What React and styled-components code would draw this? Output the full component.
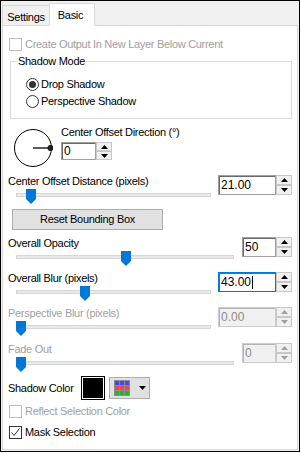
import React from "react"
import styled, { createGlobalStyle } from "styled-components"

const GlobalStyle = createGlobalStyle`
  html, body {
    margin: 0;
    padding: 0;
    background: #fff;
  }
  body {
    font-family: "Liberation Sans", Arial, sans-serif;
    font-size: 11px;
    letter-spacing: -0.3px;
    color: #000;
  }
`

const Frame = styled.div`
  width: 300px;
  height: 452px;
  box-sizing: border-box;
  border: 1px solid #000;
  background: #f0f0f0;
  display: flex;
  flex-direction: column;
`

const TabStrip = styled.div`
  display: flex;
  align-items: flex-end;
  height: 24px;
  padding-left: 1px;
  flex-shrink: 0;
`

const Tab = styled.div`
  box-sizing: border-box;
  height: ${(p) => (p.$active ? 23 : 20)}px;
  width: ${(p) => (p.$active ? 46 : 48)}px;
  margin-left: ${(p) => (p.$active ? -1 : 0)}px;
  margin-bottom: ${(p) => (p.$active ? -1 : 0)}px;
  padding: ${(p) => (p.$active ? "1px 3px 0 0" : "3px 0 0 0")};
  border: 1px solid #d9d9d9;
  border-bottom: none;
  background: ${(p) => (p.$active ? "#fff" : "#f0f0f0")};
  position: relative;
  z-index: ${(p) => (p.$active ? 1 : 0)};
  display: flex;
  justify-content: center;
  align-items: center;
  line-height: 13px;
`

const Panel = styled.div`
  flex: 1;
  margin: 0 1px 1px 1px;
  border: 1px solid #d9d9d9;
  background: #fff;
  display: flex;
  flex-direction: column;
  padding-top: 12px;
`

const CheckRow = styled.div`
  display: flex;
  align-items: center;
  gap: 3px;
  height: 13px;
  line-height: 13px;
  margin: ${(p) => p.$mt || 0}px 0 0 6px;
  color: ${(p) => (p.$disabled ? "#a0a0a0" : "#000")};
`

const Box = styled.span`
  width: 13px;
  height: 13px;
  box-sizing: border-box;
  border: 1px solid ${(p) => (p.$disabled ? "#bcbcbc" : "#333")};
  background: #fff;
  display: flex;
  align-items: center;
  justify-content: center;
`

const Group = styled.fieldset`
  margin: 4px 0 0 7px;
  width: 282px;
  box-sizing: border-box;
  border: 1px solid #dcdcdc;
  padding: 10px 0 10px 6px;
  display: flex;
  flex-direction: column;
  gap: 4px;
`

const Legend = styled.legend`
  padding: 0 1px;
  line-height: 13px;
`

const RadioRow = styled.div`
  display: flex;
  align-items: center;
  gap: 2px;
  height: 13px;
  line-height: 13px;
  margin-left: 9px;
`

const RadioCircle = styled.span`
  width: 13px;
  height: 13px;
  box-sizing: border-box;
  border: 1px solid #333;
  border-radius: 50%;
  background: #fff;
  display: flex;
  align-items: center;
  justify-content: center;

  &::after {
    content: "";
    display: ${(p) => (p.$checked ? "block" : "none")};
    width: 7px;
    height: 7px;
    border-radius: 50%;
    background: #333;
  }
`

const DialRow = styled.div`
  display: flex;
  margin: 7px 0 0 10px;
`

const Dial = styled.svg`
  width: 40px;
  height: 40px;
  margin-top: 2px;
  flex-shrink: 0;
`

const DialSide = styled.div`
  display: flex;
  flex-direction: column;
  gap: 4px;
  margin-left: 8px;
`

const Label = styled.div`
  line-height: 12px;
  height: 12px;
  white-space: nowrap;
  color: ${(p) => (p.$disabled ? "#a0a0a0" : "#000")};
`

const Spin = styled.div`
  display: flex;
  height: ${(p) => p.$h || 20}px;
  flex-shrink: 0;
`

const SpinField = styled.div`
  width: ${(p) => p.$w}px;
  box-sizing: border-box;
  border: 1px solid ${(p) => (p.$focused ? "#0078d7" : p.$disabled ? "#cccccc" : "#a0a0a0")};
  box-shadow: inset 1px 1px 0 ${(p) => (p.$disabled ? "#b4b4b4" : "#696969")};
  background: ${(p) => (p.$disabled ? "#f0f0f0" : "#fff")};
  color: ${(p) => (p.$disabled ? "#8d8d8d" : "#000")};
  font-size: 12px;
  letter-spacing: 0;
  padding-left: 2px;
  display: flex;
  align-items: center;
`

const Caret = styled.span`
  width: 1px;
  height: 13px;
  background: #000;
  margin-left: 1px;
`

const SpinButtons = styled.div`
  width: 16px;
  display: flex;
  flex-direction: column;
`

const SpinButton = styled.div`
  flex: 1;
  box-sizing: border-box;
  border: 1px solid #c8c8c8;
  background: #f0f0f0;
  display: flex;
  align-items: center;
  justify-content: center;
`

const SliderRow = styled.div`
  display: grid;
  grid-template-columns: 1fr auto;
  margin: ${(p) => p.$mt}px 5px 0 5px;
`

const SliderCol = styled.div`
  display: flex;
  flex-direction: column;
`

const Slider = styled.div`
  position: relative;
  width: ${(p) => p.$w}px;
  height: 17px;
  margin: 1px 0 0 8px;
`

const Track = styled.div`
  margin-top: 5px;
  height: 4px;
  box-sizing: border-box;
  border: 1px solid #d6d6d6;
  background: #e7eaea;
`

const Thumb = styled.svg`
  position: absolute;
  top: 1px;
  left: ${(p) => p.$pos}px;
  width: 10px;
  height: 15px;
`

const PushButton = styled.div`
  box-sizing: border-box;
  width: 151px;
  height: 21px;
  margin: 4px 0 0 9px;
  border: 1px solid #adadad;
  background: #e1e1e1;
  display: flex;
  align-items: center;
  justify-content: center;
  line-height: 13px;
`

const ColorRow = styled.div`
  display: flex;
  align-items: center;
  margin: 3px 0 0 5px;
  height: 24px;
`

const ColorLabel = styled.div`
  width: 73px;
  line-height: 12px;
`

const Swatch = styled.div`
  width: 24px;
  height: 24px;
  box-sizing: border-box;
  border: 1px solid #000;
  padding: 1px;
  background: #fff;

  &::after {
    content: "";
    display: block;
    width: 100%;
    height: 100%;
    background: ${(p) => p.$color};
  }
`

const PickerButton = styled.div`
  width: 41px;
  height: 22px;
  box-sizing: border-box;
  margin-left: 4px;
  border: 1px solid #adadad;
  background: #e1e1e1;
  display: flex;
  align-items: center;
  padding-left: 4px;
  gap: 9px;
`

const Arrow = ({ up, disabled }) => (
  <svg width="7" height="4" viewBox="0 0 7 4">
    <polygon
      points={up ? "0,4 7,4 3.5,0" : "0,0 7,0 3.5,4"}
      fill={disabled ? "#a0a0a0" : "#000"}
    />
  </svg>
)

const Checkbox = ({ label, checked, disabled, mt }) => (
  <CheckRow $disabled={disabled} $mt={mt}>
    <Box $disabled={disabled}>
      {checked && (
        <svg width="11" height="11" viewBox="0 0 11 11">
          <polyline points="1.5,5.5 4,8.5 9.5,1.5" fill="none" stroke="#333" strokeWidth="1" />
        </svg>
      )}
    </Box>
    <span>{label}</span>
  </CheckRow>
)

const Radio = ({ label, checked }) => (
  <RadioRow>
    <RadioCircle $checked={checked} />
    <span>{label}</span>
  </RadioRow>
)

const SpinBox = ({ value, width, height, disabled, focused }) => (
  <Spin $h={height}>
    <SpinField $w={width} $disabled={disabled} $focused={focused}>
      {value}
      {focused && <Caret />}
    </SpinField>
    <SpinButtons>
      <SpinButton>
        <Arrow up disabled={disabled} />
      </SpinButton>
      <SpinButton>
        <Arrow disabled={disabled} />
      </SpinButton>
    </SpinButtons>
  </Spin>
)

const SliderField = ({ label, value, trackWidth, pos, boxWidth, disabled, focused, mt }) => (
  <SliderRow $mt={mt}>
    <SliderCol>
      <Label $disabled={disabled}>{label}</Label>
      <Slider $w={trackWidth}>
        <Track />
        <Thumb $pos={pos} viewBox="0 0 10 15">
          <path d="M0 0 H10 V10 L5 15 L0 10 Z" fill="#0078d7" />
        </Thumb>
      </Slider>
    </SliderCol>
    <SpinBox value={value} width={boxWidth} disabled={disabled} focused={focused} />
  </SliderRow>
)

const PaletteIcon = () => {
  const rows = ["#4646ff", "#f04848", "#38a838"]
  return (
    <svg width="16" height="16" viewBox="0 0 16 16">
      <rect x="0" y="0" width="16" height="16" fill="#8c8c8c" />
      {rows.map((c, r) =>
        [0, 1, 2].map((col) => (
          <rect key={`${r}-${col}`} x={1 + col * 5} y={1 + r * 5} width="4" height="4" fill={c} />
        ))
      )}
    </svg>
  )
}

export default function App() {
  return (
    <>
      <GlobalStyle />
      <Frame>
        <TabStrip>
          <Tab>Settings</Tab>
          <Tab $active>Basic</Tab>
        </TabStrip>
        <Panel>
          <Checkbox label="Create Output In New Layer Below Current" disabled />

          <Group>
            <Legend>Shadow Mode</Legend>
            <Radio label="Drop Shadow" checked />
            <Radio label="Perspective Shadow" />
          </Group>

          <DialRow>
            <Dial viewBox="0 0 40 40">
              <circle cx="20" cy="20" r="18.5" fill="none" stroke="#000" strokeWidth="1" />
              <line x1="20" y1="20" x2="37" y2="20" stroke="#5a5a5a" strokeWidth="2" />
              <circle cx="37.5" cy="20" r="3" fill="#1e1e1e" />
            </Dial>
            <DialSide>
              <Label>Center Offset Direction (°)</Label>
              <SpinBox value="0" width={35} height={18} />
            </DialSide>
          </DialRow>

          <SliderField label="Center Offset Distance (pixels)" value="21.00" trackWidth={195} pos={10} boxWidth={58} mt={7} />

          <PushButton>Reset Bounding Box</PushButton>

          <SliderField label="Overall Opacity" value="50" trackWidth={218} pos={105} boxWidth={34} mt={7} />
          <SliderField label="Overall Blur (pixels)" value="43.00" trackWidth={195} pos={64} boxWidth={58} focused mt={5} />
          <SliderField label="Perspective Blur (pixels)" value="0.00" trackWidth={195} pos={0} boxWidth={58} disabled mt={5} />
          <SliderField label="Fade Out" value="0" trackWidth={218} pos={0} boxWidth={34} disabled mt={6} />

          <ColorRow>
            <ColorLabel>Shadow Color</ColorLabel>
            <Swatch $color="#000" />
            <PickerButton>
              <PaletteIcon />
              <Arrow />
            </PickerButton>
          </ColorRow>

          <Checkbox label="Reflect Selection Color" disabled mt={5} />
          <Checkbox label="Mask Selection" checked mt={8} />
        </Panel>
      </Frame>
    </>
  )
}
